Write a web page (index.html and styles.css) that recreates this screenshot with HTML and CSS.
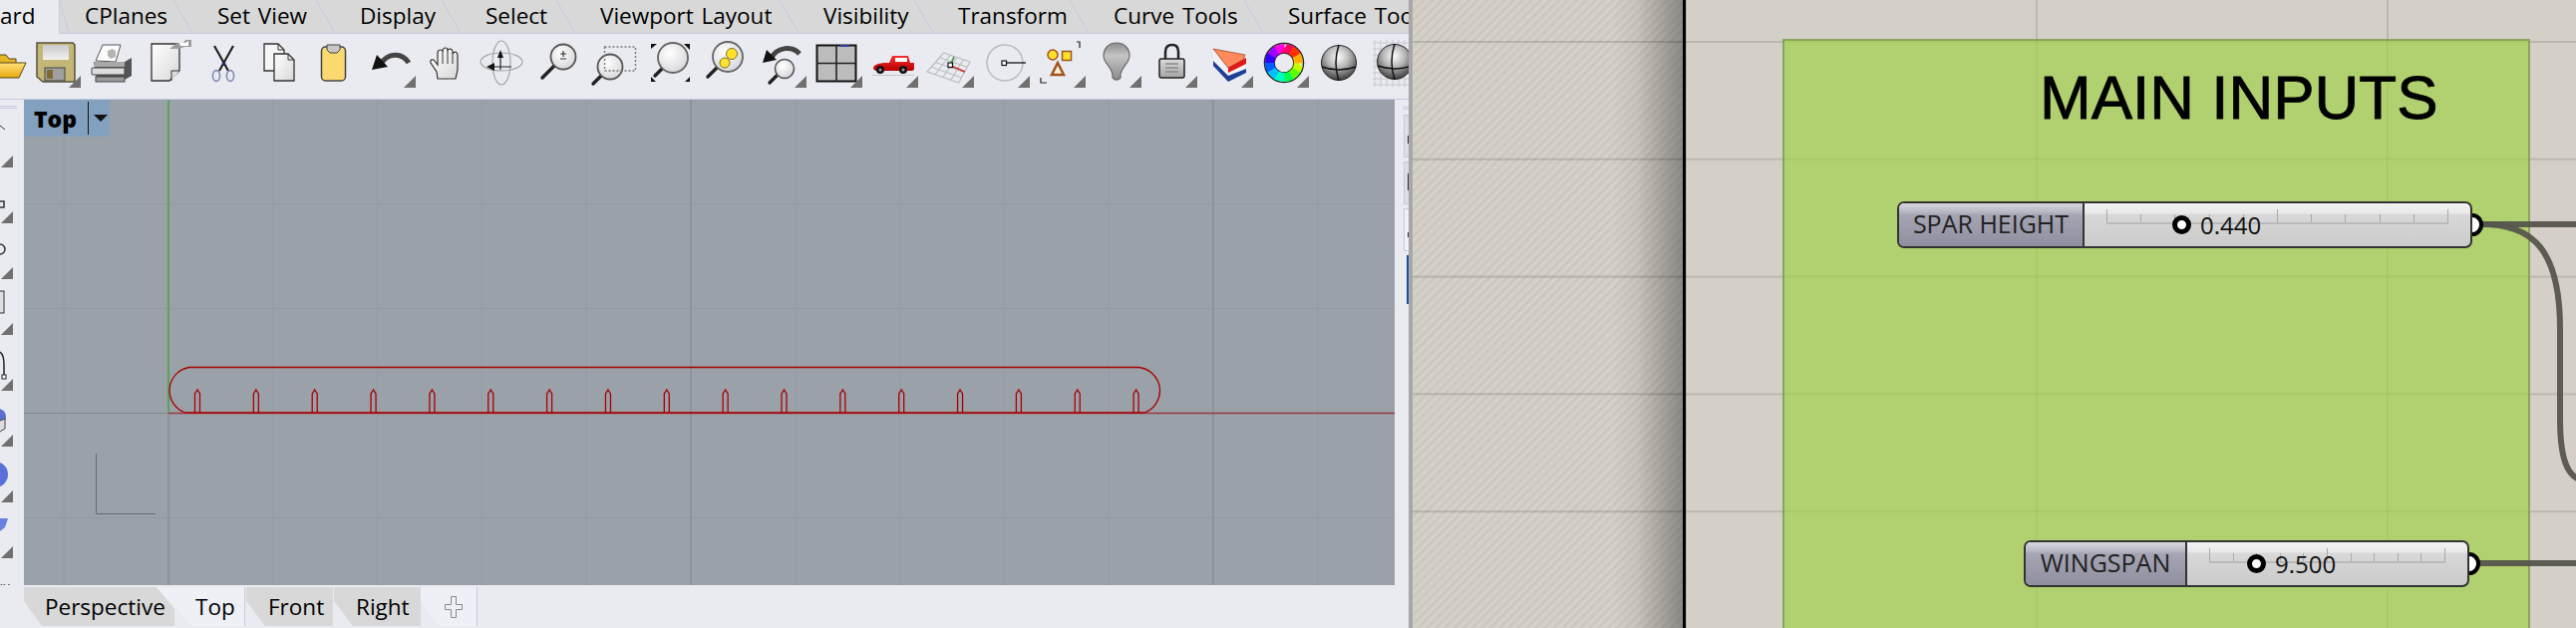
FILE: index.html
```html
<!DOCTYPE html>
<html lang="en">
<head>
<meta charset="utf-8">
<title>Rhino and Grasshopper</title>
<link rel="stylesheet" href="styles.css">
</head>
<body>
<svg class="defs" aria-hidden="true">
  <defs>
    <linearGradient id="gPaper" x1="0" y1="0" x2="1" y2="1"><stop offset="0" stop-color="#fff"/><stop offset="1" stop-color="#d8d8d8"/></linearGradient>
    <linearGradient id="gYellow" x1="0" y1="0" x2="0" y2="1"><stop offset="0" stop-color="#ffe27a"/><stop offset="1" stop-color="#eaa80e"/></linearGradient>
    <linearGradient id="gLabel" x1="0" y1="0" x2="0" y2="1"><stop offset="0" stop-color="#c9c9c9"/><stop offset="1" stop-color="#f2f2f2"/></linearGradient>
    <linearGradient id="gRed" x1="0" y1="0" x2="0" y2="1"><stop offset="0" stop-color="#f43030"/><stop offset="1" stop-color="#b80000"/></linearGradient>
    <linearGradient id="gLock" x1="0" y1="0" x2="0" y2="1"><stop offset="0" stop-color="#dcdcdc"/><stop offset="1" stop-color="#a4a4a4"/></linearGradient>
    <linearGradient id="gBulb" x1="0" y1="0" x2="0" y2="1"><stop offset="0" stop-color="#8c8c8c"/><stop offset=".35" stop-color="#c4c4c4"/><stop offset="1" stop-color="#8a8a8a"/></linearGradient>
    <radialGradient id="gGlass" cx=".4" cy=".35" r=".8"><stop offset="0" stop-color="#fff"/><stop offset="1" stop-color="#d0d0d4"/></radialGradient>
    <radialGradient id="gSphere" cx=".48" cy=".33" r=".72"><stop offset="0" stop-color="#fff"/><stop offset=".45" stop-color="#b4b4b4"/><stop offset="1" stop-color="#2c2c2c"/></radialGradient>
    <path id="notch" d="M195.500 414V395L198 391L200.500 395V414"/>
    <path id="dropdown" d="M56 36V48H44Z"/>
    <path id="sideDrop" d="M13 44V56H1Z"/>
  </defs>
</svg>
<div class="app">
  <section class="rhino">
    <nav class="ribbon">
      <span class="tab tab-active"><span class="tab-clip">ard</span></span>
      <span class="tab tab-first">CPlanes</span>
      <span class="tab">Set View</span>
      <span class="tab">Display</span>
      <span class="tab">Select</span>
      <span class="tab">Viewport Layout</span>
      <span class="tab">Visibility</span>
      <span class="tab">Transform</span>
      <span class="tab">Curve Tools</span>
      <span class="tab">Surface Tools</span>
    </nav>
    <div class="toolbar">
      <svg class="tool" viewBox="0 0 56 50"><path d="M20 15H37L40 19H47V24H20Z" fill="#e5b422" stroke="#55461a"/><path d="M20 23H57L50 38H20Z" fill="url(#gYellow)" stroke="#55461a"/></svg>
      <svg class="tool" viewBox="0 0 56 50"><path d="M12 3H48L50 5V42H18L12 37Z" fill="#c4b676" stroke="#55523c" stroke-width="1.5"/><rect x="18" y="5" width="26" height="15" fill="url(#gLabel)"/><rect x="20" y="28" width="20" height="13" fill="#a0a0a0" stroke="#444"/><rect x="22" y="30" width="6" height="9" fill="#7d6c2d"/><use href="#dropdown" class="dd"/></svg>
      <svg class="tool" viewBox="0 0 56 50"><path d="M15 21L22 5H40L35 22Z" fill="#fbfbfb" stroke="#555"/><path d="M27 11L32 9L35 11V17L30 19L27 16Z" fill="#b4b4b4"/><path d="M13 22H44L51 18V36L44 40H16Z" fill="#555"/><rect x="11" y="28" width="33" height="7" rx="1" fill="#dcdcdc" stroke="#444"/><rect x="15" y="37" width="29" height="5" fill="#9c9c9c" stroke="#444"/><rect x="14" y="22" width="30" height="5" fill="#a8a8a8"/></svg>
      <svg class="tool" viewBox="0 0 56 50"><path d="M15 4H43V31L33 41H15Z" fill="url(#gPaper)" stroke="#333" stroke-width="1.3"/><path d="M43 31H35V41" fill="#ddd" stroke="#333"/><path d="M33 9L41 3H47L49 0H55V7H48L42 9Z" fill="#9c9c9c"/><path d="M43 3H49L52 1V6H44Z" fill="#fff"/></svg>
      <svg class="tool" viewBox="0 0 56 50"><path d="M22 6L36 31M41 6L27 31" stroke="#222" stroke-width="2.2" fill="none"/><ellipse cx="24" cy="36" rx="3.6" ry="5.4" fill="none" stroke="#7f8ab4" stroke-width="1.6"/><ellipse cx="38" cy="36" rx="3.6" ry="5.4" fill="none" stroke="#7f8ab4" stroke-width="1.6"/><circle cx="31.500" cy="24" r="1.8" fill="#1d2b70"/></svg>
      <svg class="tool" viewBox="0 0 56 50"><path d="M16 4H30L36 10V31H16Z" fill="#f6f6f6" stroke="#333" stroke-width="1.3"/><path d="M30 4V10H36" fill="none" stroke="#333"/><path d="M26 14H40L46 20V41H26Z" fill="url(#gPaper)" stroke="#333" stroke-width="1.3"/><path d="M40 14V20H46" fill="none" stroke="#333"/></svg>
      <svg class="tool" viewBox="0 0 56 50"><rect x="17.500" y="7" width="24" height="34" rx="4" fill="#fcd96e" stroke="#444" stroke-width="1.5"/><path d="M23 5H36V10L33 13H26L23 10Z" fill="#c8c8c8" stroke="#444"/></svg>
      <svg class="tool" viewBox="0 0 56 50"><path d="M21 24C28 13 42 12 49 23" fill="none" stroke="#444" stroke-width="5"/><path d="M12 30L17 15L28 27Z" fill="#111"/><use href="#dropdown" class="dd"/></svg>
      <svg class="tool" viewBox="0 0 56 50"><path d="M22 39L21 32L15 23Q14 19 18 20L22 25V13Q22 10 25 10Q27 10 27 12Q27 8 30 8Q32 8 32 10Q33 9 35 9Q37 10 37 12V14Q38 12 40 12Q42 13 42 15V30L40 39Z" fill="url(#gPaper)" stroke="#333" stroke-width="1.2"/><path d="M27 12V24M32 10V24M37 14V24" stroke="#333" fill="none"/></svg>
      <svg class="tool" viewBox="0 0 56 50"><ellipse cx="30" cy="22" rx="21" ry="9" fill="none" stroke="#a6a6a6" stroke-width="1.2"/><ellipse cx="30" cy="23" rx="9" ry="22" fill="none" stroke="#a6a6a6" stroke-width="1.2"/><path d="M29 30V14M22 27H40" stroke="#222" stroke-width="1.2"/><path d="M29 10L26 18H32ZM15 27L23 23V31Z" fill="#111"/></svg>
      <svg class="tool" viewBox="0 0 56 50"><path d="M27 26L15 38" stroke="#222" stroke-width="3.4" stroke-linecap="round"/><circle cx="36" cy="17" r="12.500" fill="url(#gGlass)" stroke="#555" stroke-width="1.8"/><path d="M33 14H39M36 11V17M33 19H39" stroke="#333" stroke-width="1.2"/></svg>
      <svg class="tool" viewBox="0 0 56 50"><path d="M18 36L10 44" stroke="#222" stroke-width="3.4" stroke-linecap="round"/><circle cx="27" cy="27" r="12.500" fill="url(#gGlass)" stroke="#555" stroke-width="1.8"/><rect x="21.500" y="7" width="31" height="24" fill="none" stroke="#777" stroke-width="1.4" stroke-dasharray="2 2"/></svg>
      <svg class="tool" viewBox="0 0 56 50"><path d="M23 29L16 36" stroke="#222" stroke-width="3.4" stroke-linecap="round"/><circle cx="34" cy="18" r="15" fill="url(#gGlass)" stroke="#666" stroke-width="1.8"/><path d="M12 4H18L12 9ZM51 4V10L45 4ZM12 42V37L17 42ZM51 42H46L51 37Z" fill="#111"/></svg>
      <svg class="tool" viewBox="0 0 56 50"><path d="M22 28L13 37" stroke="#222" stroke-width="3.4" stroke-linecap="round"/><circle cx="33" cy="17" r="15" fill="url(#gGlass)" stroke="#666" stroke-width="1.8"/><circle cx="37" cy="14" r="5.500" fill="#ffe12c" stroke="#7a7420"/><circle cx="30" cy="23" r="5" fill="#ffe12c" stroke="#7a7420"/></svg>
      <svg class="tool" viewBox="0 0 56 50"><path d="M20 19C27 6 42 6 49 14" fill="none" stroke="#444" stroke-width="5"/><path d="M12 23L16 10L26 20Z" fill="#111"/><path d="M26 36L19 43" stroke="#222" stroke-width="3.4" stroke-linecap="round"/><circle cx="34" cy="29" r="9.500" fill="url(#gGlass)" stroke="#555" stroke-width="1.6"/><use href="#dropdown" class="dd"/></svg>
      <svg class="tool" viewBox="0 0 56 50"><rect x="10.500" y="5.500" width="39" height="36" fill="#bcbcbc" stroke="#111" stroke-width="2"/><path d="M30 5V42M10 23.500H50" stroke="#222" stroke-width="1.6"/><rect x="34" y="5" width="9" height="2" fill="#2840a0"/><use href="#dropdown" class="dd"/></svg>
      <svg class="tool" viewBox="0 0 56 50"><path d="M11 29C11 25 15 24 21 23L27 23L30 16H46L48 23H52V28Q52 31 50 31H13Z" fill="url(#gRed)"/><rect x="33" y="18" width="12" height="4" fill="#fff"/><circle cx="18" cy="30" r="4" fill="#111"/><circle cx="18" cy="30" r="1.5" fill="#999"/><circle cx="41" cy="30" r="4" fill="#111"/><circle cx="41" cy="30" r="1.5" fill="#999"/><path d="M10 35.500H52" stroke="#c6c6c6"/><use href="#dropdown" class="dd"/></svg>
      <svg class="tool" viewBox="0 0 56 50"><path d="M9 32L25.600 13L52 22L40.700 43ZM13.200 27.200L43.500 37.800M17.300 22.500L46.400 32.500M21.500 17.800L49.200 27.300M16.900 34.750L32.200 15.250M24.900 37.500L38.800 17.500M32.800 40.250L45.400 19.750" fill="none" stroke="#bdbdbd" stroke-width="1.2"/><path d="M32 26L36 17" stroke="#2f9a3a" stroke-width="1.6"/><path d="M33 26L47 32" stroke="#c8322e" stroke-width="1.6"/><rect x="30" y="23" width="4.500" height="4.500" fill="#fff" stroke="#111" stroke-width="1.200"/><use href="#dropdown" class="dd"/></svg>
      <svg class="tool" viewBox="0 0 56 50"><circle cx="31" cy="23" r="18" fill="none" stroke="#bbb" stroke-width="1.5"/><path d="M33 23H52" stroke="#111" stroke-width="1.300"/><rect x="28" y="21" width="4.500" height="4.500" fill="#fff" stroke="#111" stroke-width="1.200"/><use href="#dropdown" class="dd"/></svg>
      <svg class="tool" viewBox="0 0 56 50"><circle cx="23" cy="15" r="5" fill="#ffe02c" stroke="#a0541c" stroke-width="1.500"/><rect x="32.500" y="11.500" width="9" height="9" fill="#ffe02c" stroke="#a0541c" stroke-width="1.500"/><path d="M28 23L34 35H22Z" fill="#f4f0e0" stroke="#a0541c" stroke-width="2.500"/><path d="M47 2H50V8M11 38V43H17" fill="none" stroke="#222" stroke-width="1.200"/><use href="#dropdown" class="dd"/></svg>
      <svg class="tool" viewBox="0 0 56 50"><path d="M31 3C22 3 18 10 18 16C18 23 25 26 27 34V38Q31 42 35 38V34C37 26 44 23 44 16C44 10 40 3 31 3Z" fill="url(#gBulb)" stroke="#6a6a6a" stroke-width="1.200"/><use href="#dropdown" class="dd"/></svg>
      <svg class="tool" viewBox="0 0 56 50"><path d="M24 20V12Q24 5 31 5Q37 5 37 12V20" fill="none" stroke="#222" stroke-width="2.500"/><rect x="18" y="19" width="25" height="19" rx="2" fill="url(#gLock)" stroke="#222" stroke-width="1.500"/><path d="M24 24H37M24 28H37M24 32H37" stroke="#8a8a8a" stroke-width="1.300"/><use href="#dropdown" class="dd"/></svg>
      <svg class="tool" viewBox="0 0 56 50"><path d="M16 9L31 31V41L16 26Z" fill="#f2f2f6"/><path d="M31 33L49 24V31L31 39Z" fill="#f2f2f6"/><path d="M16 9L48 15L46 20L31 28Z" fill="#ff8a5c" stroke="#a8482c" stroke-width=".8"/><path d="M31 28L49 18V24L31 33Z" fill="#e01818"/><path d="M16 21L31 36L49 29V33L31 42L16 26Z" fill="#1f3f96"/><use href="#dropdown" class="dd"/></svg>
      <svg class="tool" viewBox="0 0 56 50"><g class="hue"><circle class="ring" cx="31" cy="23" r="19.500"/><circle class="ring" cx="31" cy="23" r="10"/><circle class="h0" cx="31" cy="23" r="14.500" pathLength="12"/><circle class="h1" cx="31" cy="23" r="14.500" pathLength="12"/><circle class="h2" cx="31" cy="23" r="14.500" pathLength="12"/><circle class="h3" cx="31" cy="23" r="14.500" pathLength="12"/><circle class="h4" cx="31" cy="23" r="14.500" pathLength="12"/><circle class="h5" cx="31" cy="23" r="14.500" pathLength="12"/><circle class="h6" cx="31" cy="23" r="14.500" pathLength="12"/><circle class="h7" cx="31" cy="23" r="14.500" pathLength="12"/><circle class="h8" cx="31" cy="23" r="14.500" pathLength="12"/><circle class="h9" cx="31" cy="23" r="14.500" pathLength="12"/><circle class="h10" cx="31" cy="23" r="14.500" pathLength="12"/><circle class="h11" cx="31" cy="23" r="14.500" pathLength="12"/></g><use href="#dropdown" class="dd"/></svg>
      <svg class="tool" viewBox="0 0 56 50"><circle cx="30" cy="23" r="17.500" fill="url(#gSphere)" stroke="#222"/><path d="M13 27Q30 33 47 27M30 5Q24 23 30 41" fill="none" stroke="#111" stroke-width="1.500"/></svg>
      <svg class="tool" viewBox="0 0 56 50"><path d="M8 3H56M8 9H56M8 15H56M8 21H56M8 27H56M8 33H56M8 39H56M8 45H56M10 0V47M16 0V47M22 0V47M28 0V47M34 0V47M40 0V47M46 0V47M52 0V47" stroke="#c9c9d0"/><circle cx="30" cy="22" r="17.500" fill="url(#gSphere)" stroke="#222"/><path d="M13 26Q30 32 47 26M30 4Q24 22 30 40" fill="none" stroke="#111" stroke-width="1.500"/></svg>
    </div>
    <div class="work">
      <aside class="side">
        <span class="grip"></span>
        <div class="side-cell"><svg class="side-icon" viewBox="0 0 24 56"><path d="M0 14L5 18" stroke="#333"/><use href="#sideDrop" class="dd"/></svg></div>
        <div class="side-cell"><svg class="side-icon" viewBox="0 0 24 56"><path d="M0 34H4V40H0" fill="none" stroke="#333" stroke-width="1.500"/><use href="#sideDrop" class="dd"/></svg></div>
        <div class="side-cell"><svg class="side-icon" viewBox="0 0 24 56"><circle cx="0" cy="26" r="5" fill="none" stroke="#333" stroke-width="1.500"/><use href="#sideDrop" class="dd"/></svg></div>
        <div class="side-cell"><svg class="side-icon" viewBox="0 0 24 56"><rect x="-2" y="12" width="6" height="22" fill="#ddd" stroke="#333"/><use href="#sideDrop" class="dd"/></svg></div>
        <div class="side-cell"><svg class="side-icon" viewBox="0 0 24 56"><path d="M0 17Q4 20 4 30V42" fill="none" stroke="#222" stroke-width="1.500"/><rect x="2" y="40" width="4" height="4" fill="#fff" stroke="#222"/><use href="#sideDrop" class="dd"/></svg></div>
        <div class="side-cell"><svg class="side-icon" viewBox="0 0 24 56"><circle cx="-2" cy="26" r="8" fill="#5a6fd0"/><path d="M0 30L5 28V38L0 41" fill="#ddd" stroke="#444"/><use href="#sideDrop" class="dd"/></svg></div>
        <div class="side-cell"><svg class="side-icon" viewBox="0 0 24 56"><circle cx="-5" cy="28" r="13" fill="#5a6fd8"/><use href="#sideDrop" class="dd"/></svg></div>
        <div class="side-cell"><svg class="side-icon" viewBox="0 0 24 56"><path d="M0 16H8L5 25L0 29Z" fill="#6a80e0"/><use href="#sideDrop" class="dd"/></svg></div>
        <span class="more">»›</span>
      </aside>
      <main class="viewport">
        <div class="view-label"><b class="view-name">Top</b><span class="view-arrow"></span></div>
        <svg class="model" viewBox="24 100 1375 487">
          <path class="y-axis" d="M169 100V414"/>
          <path class="x-axis" d="M169 414.500H1399"/>
          <path class="triad" d="M96.500 455V515.500H156"/>
          <path class="curve" d="M190 368.500H1142A23.500 23.500 0 0 1 1148 414H186A23.500 23.500 0 0 1 190 368.500Z"/>
          <g class="curve">
            <use href="#notch"/><use href="#notch" x="58.850"/><use href="#notch" x="117.700"/><use href="#notch" x="176.550"/><use href="#notch" x="235.400"/><use href="#notch" x="294.250"/><use href="#notch" x="353.100"/><use href="#notch" x="411.950"/><use href="#notch" x="470.800"/><use href="#notch" x="529.650"/><use href="#notch" x="588.500"/><use href="#notch" x="647.350"/><use href="#notch" x="706.200"/><use href="#notch" x="765.050"/><use href="#notch" x="823.900"/><use href="#notch" x="882.750"/><use href="#notch" x="941.600"/>
          </g>
        </svg>
      </main>
      <aside class="dock">
        <span class="grip grip-dock"></span>
        <span class="dock-tab"><i class="dock-mark"></i></span>
        <span class="dock-tab"><i class="dock-mark dock-mark-long"></i></span>
        <span class="dock-tab dock-tab-open"><i class="dock-mark dock-mark-short"></i></span>
        <span class="dock-box"></span>
      </aside>
    </div>
    <nav class="viewtabs">
      <span class="vtab vtab-first">Perspective</span>
      <span class="vtab vtab-active">Top</span>
      <span class="vtab vtab-plain">Front</span>
      <span class="vtab vtab-plain">Right</span>
      <span class="vtab vtab-add"><svg class="plus" viewBox="0 0 18 22"><path d="M6.500 .5H11.500V8.500H17.500V13.500H11.500V21.500H6.500V13.500H.5V8.500H6.500Z" fill="none" stroke="#8a8a8a"/></svg></span>
    </nav>
  </section>
  <section class="gh">
    <div class="gh-hatch"></div>
    <div class="gh-canvas">
      <div class="group">
        <h1 class="group-title">MAIN INPUTS</h1>
      </div>
      <svg class="wires" viewBox="1691 0 893 630">
        <path d="M2490 225H2584"/>
        <path d="M2490 225C2540 225 2568 250 2568 330V420C2568 460 2575 478 2590 482"/>
        <path d="M2480 565H2584"/>
      </svg>
      <div class="node node-spar">
        <div class="node-label node-label-spar">SPAR HEIGHT</div>
        <div class="node-slider">
          <div class="rail"><i class="tick tick-tall"></i><i class="tick"></i><i class="tick"></i><i class="tick"></i><i class="tick"></i><i class="tick tick-tall"></i><i class="tick"></i><i class="tick"></i><i class="tick"></i><i class="tick"></i><i class="tick tick-tall"></i></div>
          <div class="marker marker-spar"><span class="handle"></span><span class="value">0.440</span></div>
        </div>
        <span class="port"></span>
      </div>
      <div class="node node-wing">
        <div class="node-label node-label-wing">WINGSPAN</div>
        <div class="node-slider">
          <div class="rail"><i class="tick tick-tall"></i><i class="tick"></i><i class="tick"></i><i class="tick"></i><i class="tick"></i><i class="tick tick-tall"></i><i class="tick"></i><i class="tick"></i><i class="tick"></i><i class="tick"></i><i class="tick tick-tall"></i></div>
          <div class="marker marker-wing"><span class="handle"></span><span class="value">9.500</span></div>
        </div>
        <span class="port"></span>
      </div>
    </div>
  </section>
</div>
</body>
</html>
```
FILE: styles.css
```css
* { box-sizing: border-box; }
html, body { margin: 0; padding: 0; }
body { width: 2584px; height: 630px; overflow: hidden; font-family: "Open Sans", "Noto Sans", sans-serif; color: #000; background: #e9ebf1; }
.defs { position: absolute; width: 0; height: 0; }
.app { display: flex; width: 2584px; height: 630px; }

/* Rhino */
.rhino { width: 1413px; height: 630px; overflow: hidden; background: #e9ebf1; display: flex; flex-direction: column; flex: none; }
.ribbon { height: 34px; display: grid; grid-template-columns: 60px 114px 143px 126px 115px 224px 135px 156px 175px 200px; background: #d8d8d8; border-bottom: 1px solid #c5cbdf; flex: none; white-space: nowrap; }
.tab { position: relative; padding: 0 0 0 44px; font-size: 22.500px; word-spacing: 2px; line-height: 31px; }
.tab::before { content: ""; position: absolute; left: 0; top: 0; width: 19px; height: 33px; background: linear-gradient(to top right, transparent calc(50% - 1px), #c5cbdf 50%, transparent calc(50% + 1px)); }
.tab-first { padding-left: 25px; }
.tab-first::before { left: 0; width: 9px; }
.tab-active { height: 34px; padding: 0; background: #e9ebf1; border-right: 1px solid #c5cbdf; overflow: hidden; }
.tab-active::before { display: none; }
.tab-clip { display: block; }
.toolbar { height: 66px; padding-top: 6px; margin-left: -31px; display: flex; flex: none; border-bottom: 1px solid #c5cbdf; }
.tool { width: 56px; height: 50px; flex: none; overflow: visible; }
.dd { fill: #707070; }
.hue circle { fill: none; stroke-width: 9; stroke-dasharray: 1.06 10.94; }
.hue .ring { stroke: #222; stroke-width: 1.5; stroke-dasharray: none; }
.h0 { stroke: #c8ff00; stroke-dashoffset: 0; }
.h1 { stroke: #5cff00; stroke-dashoffset: -1; }
.h2 { stroke: #00ff50; stroke-dashoffset: -2; }
.h3 { stroke: #00ffc8; stroke-dashoffset: -3; }
.h4 { stroke: #00c0ff; stroke-dashoffset: -4; }
.h5 { stroke: #0060ff; stroke-dashoffset: -5; }
.h6 { stroke: #3000ff; stroke-dashoffset: -6; }
.h7 { stroke: #a000ff; stroke-dashoffset: -7; }
.h8 { stroke: #ff00e0; stroke-dashoffset: -8; }
.h9 { stroke: #ff0060; stroke-dashoffset: -9; }
.h10 { stroke: #ff3000; stroke-dashoffset: -10; }
.h11 { stroke: #ffb000; stroke-dashoffset: -11; }

.work { height: 487px; display: flex; flex: none; }
.side { width: 24px; flex: none; position: relative; overflow: hidden; padding-top: 12px; display: flex; flex-direction: column; }
.grip { position: absolute; left: 0; top: 6px; width: 17px; height: 3px; border-top: 1px solid #c5cbdf; border-bottom: 1px solid #c5cbdf; }
.side-cell { height: 56px; flex: none; }
.side-icon { display: block; width: 24px; height: 56px; }
.more { position: absolute; left: 0; top: 478px; font-size: 15px; line-height: 18px; }
.viewport { width: 1375px; flex: none; position: relative; overflow: hidden;
  background-color: #9aa1a9;
  background-image:
    linear-gradient(90deg, #82878e 1px, transparent 1px),
    linear-gradient(180deg, #82878e 1px, transparent 1px),
    linear-gradient(90deg, #929aa2 1px, transparent 1px),
    linear-gradient(180deg, #929aa2 1px, transparent 1px);
  background-size: 524px 100%, 100% 524px, 104.800px 100%, 100% 105px;
  background-position: 144.500px 0, 0 314px, 39.700px 0, 0 104px;
}
.view-label { position: absolute; left: 0; top: 0; width: 86px; height: 37px; background: #84a0bf; border-bottom-right-radius: 5px; display: flex; align-items: center; padding-left: 10px; z-index: 1; }
.view-name { font-size: 23px; font-weight: 800; line-height: 34px; width: 55px; height: 33px; border-right: 1px solid #111; }
.view-arrow { margin-left: 5px; width: 0; height: 0; border-style: solid; border-width: 7px 7px 0; border-color: #111 transparent transparent; }
.model { position: absolute; left: 0; top: 0; width: 1375px; height: 487px; }
.model path, .model use { fill: none; }
.y-axis { stroke: #5ba35b; stroke-width: 2; }
.x-axis { stroke: #9a3a40; stroke-width: 1.500; }
.triad { stroke: #666a70; stroke-width: 1; }
.curve { fill: none; stroke: #a80000; stroke-width: 1.300; }
.dock { width: 14px; flex: none; position: relative; overflow: hidden; display: flex; flex-direction: column; padding-top: 15px; align-items: flex-end; }
.grip-dock { left: 8px; top: 7px; width: 8px; }
.dock-tab { width: 5px; height: 43px; margin-bottom: 4px; background: #dcdee4; border: 1px solid #c5cbdf; border-right: 0; position: relative; flex: none; }
.dock-tab-open { height: 43px; margin-bottom: 4px; background: #f0f1f5; }
.dock-mark { position: absolute; right: -1px; top: 20px; width: 2px; height: 8px; background: #333; }
.dock-mark-long { top: 11px; height: 17px; }
.dock-mark-short { top: 23px; height: 5px; }
.dock-box { width: 2px; height: 49px; background: #17559a; flex: none; }

.viewtabs { height: 43px; padding: 2px 0 2px 24px; display: flex; flex: none; }
.vtab { font-size: 22.500px; line-height: 39px; background: #d8d8d8; height: 39px; position: relative; flex: none; }
.vtab-first { width: 151px; padding-left: 21px; clip-path: polygon(0 0, 133px 0, 151px 22px, 151px 100%, 18px 100%, 0 14px); }
.vtab-active { width: 89px; margin-left: -18px; padding-left: 39px; background: #eef0f5; box-shadow: inset -1px 0 #c5cbdf; clip-path: polygon(0 0, 100% 0, 100% 100%, 36px 100%); white-space: nowrap; }
.vtab-plain { width: 87px; margin-left: 1px; padding-left: 22px; clip-path: polygon(0 0, 100% 0, 100% 100%, 19px 100%, 0 14px); }
.vtab-add { width: 57px; background: #eef0f5; box-shadow: inset -1px 0 #c5cbdf; display: flex; align-items: center; justify-content: flex-end; padding-right: 15px; clip-path: polygon(0 14px, 0 0, 100% 0, 100% 100%, 18px 100%); }
.plus { width: 18px; height: 22px; display: block; }

/* Grasshopper */
.gh { flex: 1; height: 630px; display: flex; border-left: 4px solid #a7a7a7; }
.gh-hatch { width: 271px; height: 630px; flex: none;
  background-color: #d4d0c8;
  background-image:
    linear-gradient(90deg, transparent 200px, rgba(0,0,0,.06) 225px, rgba(0,0,0,.34) 271px),
    linear-gradient(180deg, rgba(90,88,80,.24) 2px, transparent 2px),
    repeating-linear-gradient(135deg, #cdc9c0 0, #cdc9c0 3px, #d5d1c9 3px, #d5d1c9 6.400px);
  background-size: 100% 100%, 100% 117.800px, auto;
  background-position: 0 0, 0 41px, 0 0;
}
.gh-canvas { flex: 1; height: 630px; position: relative; overflow: hidden; border-left: 3px solid #000;
  background-color: #d4d0c8;
  background-image:
    linear-gradient(180deg, rgba(90,88,80,.2) 2px, transparent 2px),
    linear-gradient(90deg, rgba(90,88,80,.2) 2px, transparent 2px);
  background-size: 100% 117.800px, 352px 100%;
  background-position: 0 41px, -1px 0;
}
.group { position: absolute; left: 97px; top: 39px; width: 750px; height: 600px; background: rgba(162,208,73,.7); border: 2px solid rgba(120,145,85,.7); padding: 22px 0 0 256px; }
.group-title { margin: 0; font-family: "Liberation Sans", Arial, sans-serif; font-weight: 400; font-size: 62px; line-height: 70px; white-space: nowrap; -webkit-text-stroke: .8px #000; }
.wires { position: absolute; left: 0; top: 0; width: 893px; height: 630px; }
.wires path { fill: none; stroke: #55554c; stroke-width: 6; opacity: .95; }
.node { position: absolute; height: 47px; display: flex; border: 2px solid #333; border-radius: 7px; background: linear-gradient(180deg, #f2f2f2 0, #e8e8e8 10px, #d8d8d8 11px, #cbcbcb 100%); }
.node-spar { left: 212px; top: 202px; width: 577px; }
.node-wing { left: 339px; top: 542px; width: 447px; }
.node-label { flex: none; height: 43px; border-right: 2px solid #333; border-radius: 5px 0 0 5px; font-size: 25px; line-height: 41px; color: #222; text-align: center; white-space: nowrap; background: linear-gradient(180deg, #d8d8de 0, #b2b2bf 10px, #a5a5b3 11px, #9b9bab 26px, #8f8f9f 100%); }
.node-label-spar { width: 186px; }
.node-label-wing { width: 162px; }
.node-slider { flex: 1; position: relative; padding: 0 22px; }
.rail { height: 21px; border-bottom: 2px solid #b9b9b9; display: flex; justify-content: space-between; align-items: flex-end; }
.tick { width: 1px; height: 8px; background: #a8a8a8; }
.tick-tall { height: 13px; }
.marker { position: absolute; top: 0; height: 43px; display: flex; align-items: center; gap: 9px; }
.marker-spar { left: 88px; }
.marker-wing { left: 60px; }
.handle { width: 19px; height: 19px; border-radius: 50%; background: #fff; border: 5px solid #000; flex: none; }
.value { font-size: 24px; line-height: 43px; color: #111; }
.port { position: absolute; right: -13px; top: 10px; width: 22px; height: 23px; border-radius: 50%; background: #fff; border: 4px solid #000; clip-path: inset(0 0 0 50%); }
```
